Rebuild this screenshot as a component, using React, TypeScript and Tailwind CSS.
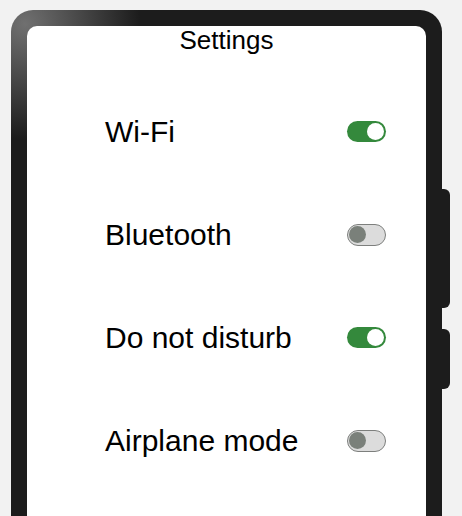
const settings = [
  { label: 'Wi-Fi', on: true },
  { label: 'Bluetooth', on: false },
  { label: 'Do not disturb', on: true },
  { label: 'Airplane mode', on: false },
];

function Toggle({ on }: { on: boolean }) {
  if (on) {
    return (
      <div className="w-[39px] h-[21px] rounded-full bg-[#34893c] flex items-center justify-end pr-[2px]">
        <div className="w-[17px] h-[17px] rounded-full bg-white" />
      </div>
    );
  }
  return (
    <div className="w-[39px] h-[22px] rounded-full bg-[#dcdcdc] border-[1.5px] border-[#7d7f7d] flex items-center pl-[1px]">
      <div className="w-[17px] h-[17px] rounded-full bg-[#7a807a]" />
    </div>
  );
}

export default function App() {
  return (
    <div
      className="w-[462px] h-[516px] overflow-hidden bg-[#f2f2f2] pl-[11px] pt-[10px] flex"
      style={{ fontFamily: '"Liberation Sans", Arial, sans-serif' }}
    >
      <div className="w-[431px] h-[560px] shrink-0 rounded-[22px] p-[16px] bg-[radial-gradient(circle_at_14px_14px,#707070,#1c1c1c_115px)]">
        <div className="h-full rounded-[10px] bg-white pl-[78px] pr-[40px]">
          <h1 className="pt-[1px] text-[26px] leading-[26px] text-black text-center -ml-[78px] -mr-[40px]">
            Settings
          </h1>
          <div className="mt-[27px]">
            {settings.map(({ label, on }) => (
              <div key={label} className="h-[103px] flex items-center justify-between">
                <span className="text-[30px] leading-none text-black">{label}</span>
                <Toggle on={on} />
              </div>
            ))}
          </div>
        </div>
      </div>
      <div className="flex flex-col gap-[21px] pt-[179px]">
        <div className="w-[8px] h-[119px] bg-[#1c1c1c] rounded-r-[6px]" />
        <div className="w-[8px] h-[60px] bg-[#1c1c1c] rounded-r-[6px]" />
      </div>
    </div>
  );
}
